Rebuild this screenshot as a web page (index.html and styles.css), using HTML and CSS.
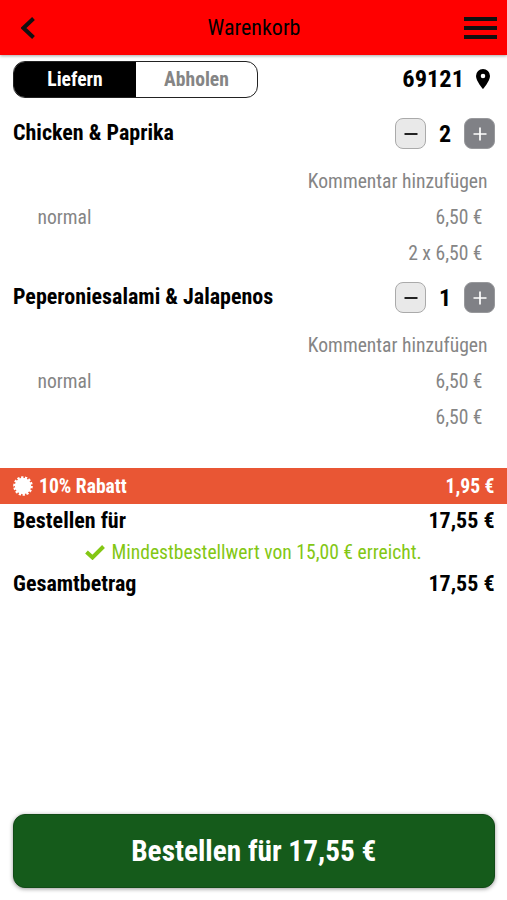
FILE: index.html
```html
<!DOCTYPE html>
<html lang="de">
<head>
<meta charset="utf-8">
<title>Warenkorb</title>
<link rel="stylesheet" href="styles.css">
</head>
<body>
<header class="bar">
  <svg class="back" viewBox="0 0 14 22"><path d="M12.500 1.500 2.500 11l10 9.500"/></svg>
  <h1><span class="t">Warenkorb</span></h1>
  <svg class="menu" viewBox="0 0 33 22"><path d="M0 2h33M0 11h33M0 20h33"/></svg>
</header>
<main>
  <section class="delivery">
    <div class="toggle"><span class="on"><span class="t">Liefern</span></span><span class="off"><span class="t">Abholen</span></span></div>
    <div class="zip"><span class="t">69121</span><svg viewBox="0 0 14 20"><path fill-rule="evenodd" d="M7 0a7 7 0 0 0-7 7c0 5 7 13 7 13s7-8 7-13a7 7 0 0 0-7-7zm0 4.700a2.300 2.300 0 1 1 0 4.600 2.300 2.300 0 0 1 0-4.600z"/></svg></div>
  </section>
  <article class="item">
    <div class="head"><h2><span class="t">Chicken &amp; Paprika</span></h2>
      <div class="stepper"><button class="minus"><svg viewBox="0 0 14 14"><path d="M.5 7h13"/></svg></button><b><span class="t">2</span></b><button class="plus"><svg viewBox="0 0 14 14"><path d="M.5 7h13M7 .5v13"/></svg></button></div>
    </div>
    <p class="comment"><span class="t">Kommentar hinzufügen</span></p>
    <p class="line"><span class="t">normal</span><span class="t">6,50 €</span></p>
    <p class="line sum"><span class="t">2 x 6,50 €</span></p>
  </article>
  <article class="item">
    <div class="head"><h2><span class="t">Peperoniesalami &amp; Jalapenos</span></h2>
      <div class="stepper"><button class="minus"><svg viewBox="0 0 14 14"><path d="M.5 7h13"/></svg></button><b><span class="t">1</span></b><button class="plus"><svg viewBox="0 0 14 14"><path d="M.5 7h13M7 .5v13"/></svg></button></div>
    </div>
    <p class="comment"><span class="t">Kommentar hinzufügen</span></p>
    <p class="line"><span class="t">normal</span><span class="t">6,50 €</span></p>
    <p class="line sum"><span class="t">6,50 €</span></p>
  </article>
  <section class="discount">
    <svg viewBox="0 0 20 20"><circle cx="10" cy="10" r="8.200"/><circle class="teeth" cx="10" cy="10" r="8.400" pathLength="28"/></svg>
    <span class="t">10% Rabatt</span><span class="t amount">1,95 €</span>
  </section>
  <section class="total"><span class="t">Bestellen für</span><span class="t">17,55 €</span></section>
  <p class="minimum"><svg viewBox="0 0 20 15"><path d="m1.500 7 6 5.500 11-11"/></svg><span class="t">Mindestbestellwert von 15,00 € erreicht.</span></p>
  <section class="total last"><span class="t">Gesamtbetrag</span><span class="t">17,55 €</span></section>
</main>
<footer><button class="order"><span class="t">Bestellen für 17,55 €</span></button></footer>
</body>
</html>
```

FILE: styles.css
```css
* { box-sizing: border-box; }
body {
  margin: 0;
  height: 900px;
  display: flex;
  flex-direction: column;
  background: #fff;
  color: #000;
  font-family: "Roboto Condensed", Roboto, sans-serif;
  font-stretch: 75%;
}
h1, h2, p { margin: 0; }
button { font: inherit; padding: 0; }
svg { display: block; flex: none; }
.t { white-space: nowrap; }
.bar {
  height: 55px;
  flex: none;
  display: grid;
  grid-template-columns: 50px 1fr 60px;
  align-items: center;
  padding: 0 10px 0 21px;
  background: #f00;
  box-shadow: 0 1px 3px rgba(0, 0, 0, .35);
}
.bar h1 { text-align: center; font-size: 22px; font-weight: 400; line-height: 30px; }
.back { width: 14px; height: 22px; }
.menu { width: 33px; height: 22px; justify-self: end; }
.back path, .menu path { fill: none; stroke: #111; stroke-width: 4; }
main { flex: 1; }
.delivery {
  height: 49px;
  padding: 6px 17px 0 13px;
  display: flex;
  justify-content: space-between;
  align-items: flex-start;
}
.toggle {
  width: 245px;
  height: 37px;
  display: flex;
  border: 1px solid #222;
  border-radius: 12px;
  overflow: hidden;
  font-size: 19.6px;
  font-weight: 700;
  line-height: 35px;
  text-align: center;
}
.on { width: 122px; background: #000; color: #fff; }
.off { flex: 1; color: #858585; }
.zip {
  height: 36px;
  display: flex;
  align-items: center;
  gap: 12px;
  font-size: 24.400px;
  font-weight: 700;
}
.zip .t { padding-bottom: 2px; }
.zip svg { width: 14px; height: 20px; }
.item { height: 164px; }
.head {
  height: 60px;
  padding: 0 12px 1px 13px;
  display: flex;
  align-items: center;
  justify-content: space-between;
}
.head h2 { font-size: 22px; line-height: 30px; padding-bottom: 2px; }
.stepper { display: flex; align-items: center; }
.stepper b { width: 38px; text-align: center; font-size: 24px; line-height: 30px; }
.minus, .plus {
  width: 31px;
  height: 31px;
  display: grid;
  place-items: center;
  border: 1px solid #aaa;
  border-radius: 8px;
  background: #e9e9e9;
}
.plus { border-color: #98999c; background: #808186; }
.stepper svg { width: 14px; height: 14px; fill: none; stroke: #222; stroke-width: 2; }
.plus svg { stroke: #fff; stroke-width: 1.700; }
.comment {
  height: 36px;
  padding-right: 19.500px;
  text-align: right;
  font-size: 19.600px;
  line-height: 36px;
  color: #858585;
}
.line {
  height: 36px;
  padding: 0 24.500px 0 37.500px;
  display: flex;
  justify-content: space-between;
  font-size: 19.600px;
  line-height: 36px;
  color: #858585;
}
.sum { justify-content: flex-end; }
.discount {
  height: 36px;
  margin-top: 36px;
  padding: 0 12.500px 0 13px;
  display: flex;
  align-items: center;
  gap: 6px;
  background: #e95634;
  color: #fff;
  font-size: 19.600px;
  font-weight: 700;
}
.discount svg { width: 20px; height: 20px; fill: #fff; }
.discount .teeth { fill: none; stroke: #fff; stroke-width: 2.800; stroke-dasharray: 1.200 .8; }
.amount { margin-left: auto; }
.total {
  height: 33px;
  padding: 0 12.500px 0 13px;
  display: flex;
  justify-content: space-between;
  font-size: 22px;
  font-weight: 700;
  line-height: 33px;
}
.minimum {
  height: 30px;
  display: flex;
  align-items: center;
  justify-content: center;
  gap: 6px;
  font-size: 19.600px;
  color: #83c714;
}
.minimum svg { width: 20px; height: 15px; fill: none; stroke: #83c714; stroke-width: 4; }
footer { flex: none; height: 86px; padding: 0 12.500px 0 13px; }
.order {
  width: 100%;
  height: 74px;
  border: 1px solid #124b17;
  border-radius: 12px;
  background: #155b1b;
  box-shadow: 0 1px 4px rgba(0, 0, 0, .4);
  color: #fff;
  font-size: 29.300px;
  font-weight: 700;
  font-stretch: 75%;
}
```
